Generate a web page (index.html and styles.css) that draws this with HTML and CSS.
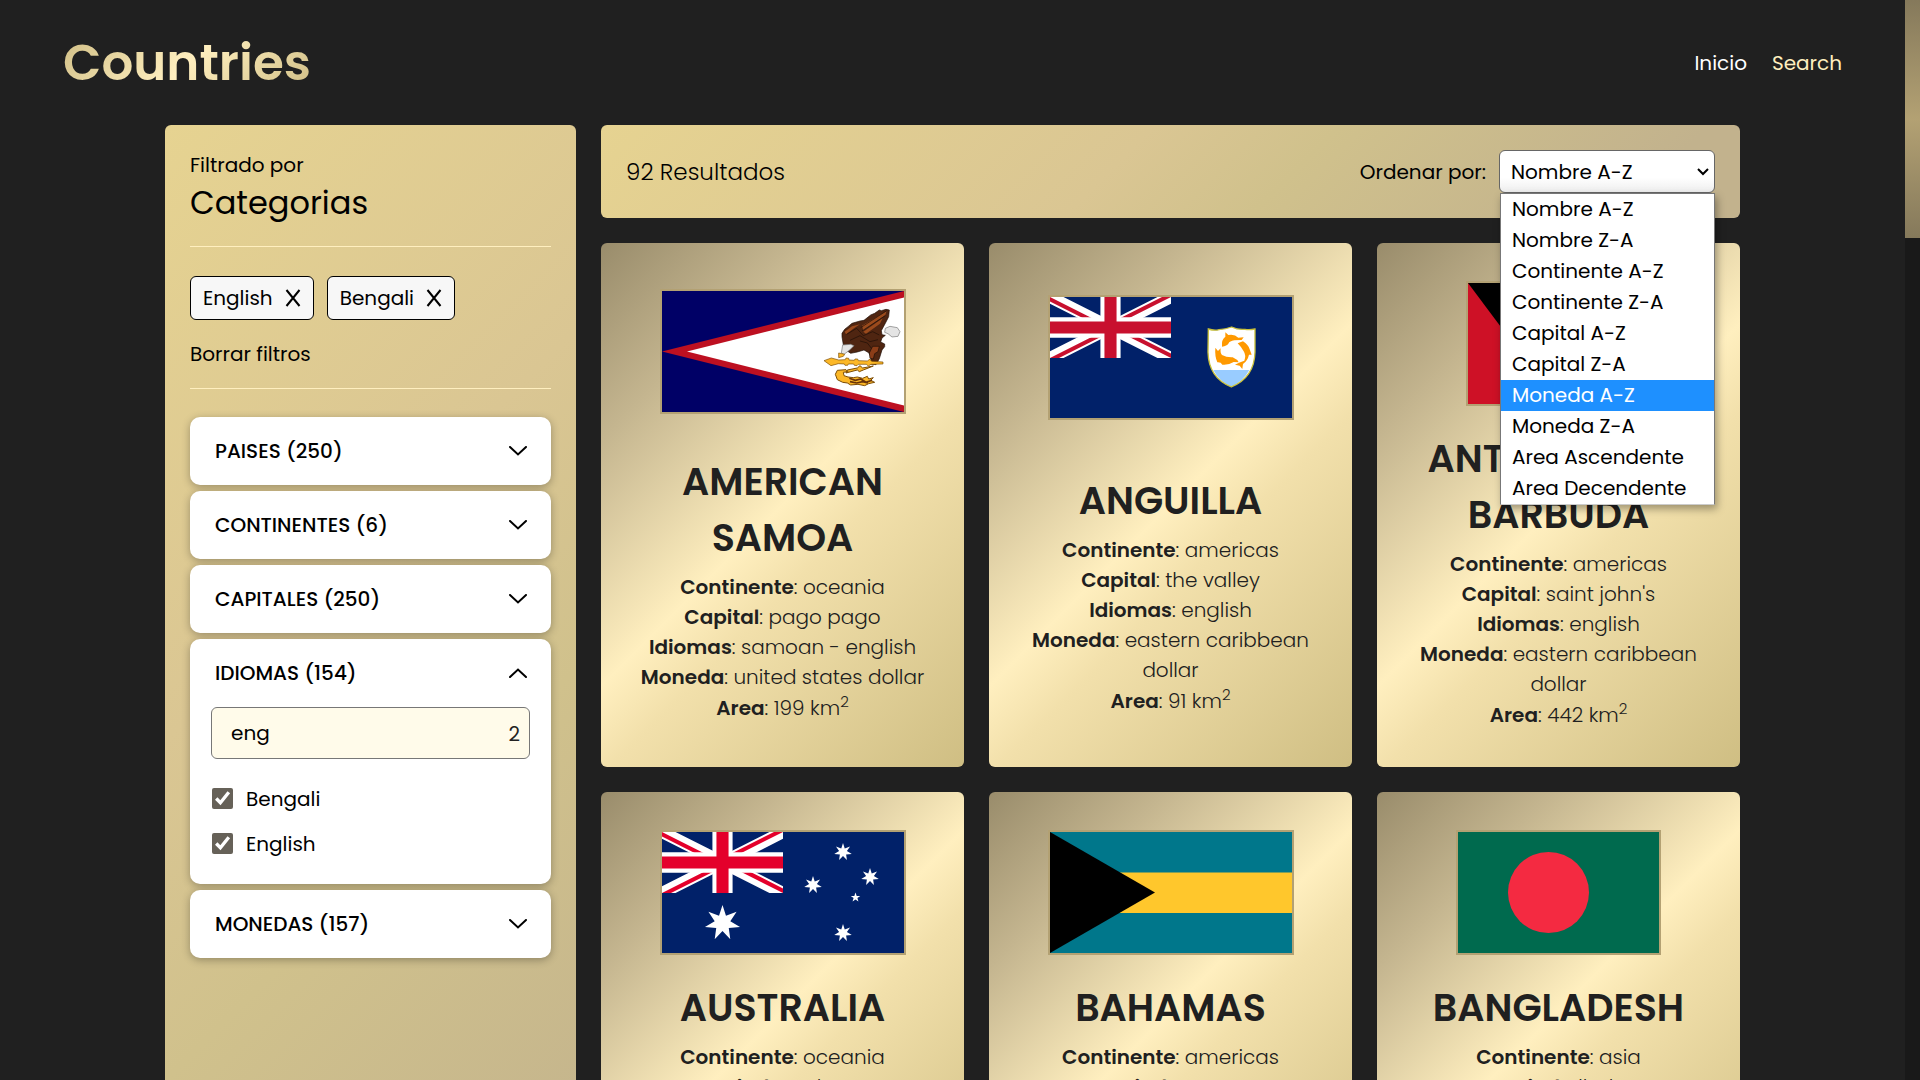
FILE: index.html
```html
<!DOCTYPE html>
<html lang="es">
<head>
<meta charset="utf-8">
<meta name="viewport" content="width=device-width, initial-scale=1">
<title>Countries</title>
<link rel="stylesheet" href="styles.css">
</head>
<body>
<svg class="defs" aria-hidden="true">
  <defs>
    <clipPath id="canton"><path d="M0 0h60v30H0z"/></clipPath>
    <clipPath id="saltire"><path d="M30 15h30v15zM30 15v15H0zM30 15H0V0zM30 15V0h30z"/></clipPath>
    <g id="jack-white" clip-path="url(#canton)"><path d="M0 0l60 30M60 0L0 30" stroke="#fff" stroke-width="6"/></g>
    <path id="jack-diag" d="M0 0l60 30M60 0L0 30" clip-path="url(#saltire)" stroke="currentColor" stroke-width="4"/>
    <g id="jack"><use href="#jack-white"/><use href="#jack-diag"/><path d="M30 0v30M0 15h60" stroke="#fff" stroke-width="10"/><path d="M30 0v30M0 15h60" stroke="currentColor" stroke-width="6"/></g>
    <path id="star7" d="M0-9L1.74-3.6 7.04-5.61 3.9-.89 8.77 2 3.13 2.49 3.9 8.11 0 4-3.9 8.11-3.13 2.49-8.77 2-3.9-.89-7.04-5.61-1.74-3.6z"/>
  </defs>
</svg>
<div class="page">
  <header class="header">
    <a class="logo" href="#">Countries</a>
    <nav class="nav">
      <a href="#">Inicio</a>
      <a class="active" href="#">Search</a>
    </nav>
  </header>

  <div class="container">
    <aside class="sidebar">
      <div class="heading">
        <p>Filtrado por</p>
        <h2>Categorias</h2>
      </div>
      <div class="applied">
        <div class="tags">
          <button class="tag" type="button">English <svg width="16" height="18" viewBox="0 0 16 18"><path d="M1.500 1l13 16M14.500 1l-13 16"/></svg></button>
          <button class="tag" type="button">Bengali <svg width="16" height="18" viewBox="0 0 16 18"><path d="M1.500 1l13 16M14.500 1l-13 16"/></svg></button>
        </div>
        <button class="clear" type="button">Borrar filtros</button>
      </div>
      <div class="accordion">
        <section class="panel"><button class="toggle" type="button">PAISES (250) <svg class="chevron" viewBox="0 0 18 10"><path d="M1 1l8 7.500L17 1"/></svg></button></section>
        <section class="panel"><button class="toggle" type="button">CONTINENTES (6) <svg class="chevron" viewBox="0 0 18 10"><path d="M1 1l8 7.500L17 1"/></svg></button></section>
        <section class="panel"><button class="toggle" type="button">CAPITALES (250) <svg class="chevron" viewBox="0 0 18 10"><path d="M1 1l8 7.500L17 1"/></svg></button></section>
        <section class="panel">
          <button class="toggle" type="button" aria-expanded="true">IDIOMAS (154) <svg class="chevron" viewBox="0 0 18 10"><path d="M1 9l8-7.500L17 9"/></svg></button>
          <div class="panel-body">
            <div class="search"><input type="text" value="eng" aria-label="Buscar idioma"><span class="count">2</span></div>
            <label class="check"><input type="checkbox" checked> Bengali</label>
            <label class="check"><input type="checkbox" checked> English</label>
          </div>
        </section>
        <section class="panel"><button class="toggle" type="button">MONEDAS (157) <svg class="chevron" viewBox="0 0 18 10"><path d="M1 1l8 7.500L17 1"/></svg></button></section>
      </div>
    </aside>

    <main class="main">
      <div class="bar">
        <p class="results">92 Resultados</p>
        <div class="sort">
          <label for="order">Ordenar por:</label>
          <div class="select-wrap">
            <select id="order">
              <option>Nombre A-Z</option><option>Nombre Z-A</option><option>Continente A-Z</option><option>Continente Z-A</option><option>Capital A-Z</option><option>Capital Z-A</option><option>Moneda A-Z</option><option>Moneda Z-A</option><option>Area Ascendente</option><option>Area Decendente</option>
            </select>
            <svg class="arrow" viewBox="0 0 12 8"><path d="M1 1l5 5 5-5"/></svg>
            <ul class="menu">
              <li>Nombre A-Z</li>
              <li>Nombre Z-A</li>
              <li>Continente A-Z</li>
              <li>Continente Z-A</li>
              <li>Capital A-Z</li>
              <li>Capital Z-A</li>
              <li class="hover">Moneda A-Z</li>
              <li>Moneda Z-A</li>
              <li>Area Ascendente</li>
              <li>Area Decendente</li>
            </ul>
          </div>
        </div>
      </div>

      <div class="cards">
        <article class="card">
          <svg class="flag" viewBox="0 0 242 121">
            <path fill="#006" d="M0 0h242v121H0z"/>
            <path fill="#bd1021" d="M0 60.500L242 0v121z"/>
            <path fill="#fff" d="M25 60.500L242 6.500v108z"/>
            <g transform="translate(138) scale(.3333)">
              <path fill="#4f2511" stroke="#1d0d06" stroke-width="2" d="M126 137l0-10 8-12 10-8 12-10 24-7 12-2 20-16 12-5 14-10 6 2 14-4 10 2-2 20-8 16-14 26 2 12 10 2-10 8-4 12 12 6 0 8-8 10-8 26-10 18-18-2 4-20-8-14-14-8-20 6-20 4-20-14z"/>
              <path fill="#9a4a1c" d="M186 104l74-44-4 12-66 46zM190 122l58-40-8 16-42 30zM134 122l22-16 24-6-18 12-24 18z"/>
              <path fill="none" stroke="#1d0d06" stroke-width="2" d="M182 110l80-52M186 120l70-46M140 130l30-18 20 22 28-12 20 10M150 148l30-14 30 18 24-6M180 150l22 6 14 18"/>
              <path fill="#e4e4e4" stroke="#777" stroke-width="2" d="M256 112l14-6 22 4 8 12-6 14-18 2-12-10-10-4zM128 162l24-2 10 4-14 14-16 12-8-4z"/>
              <path fill="#8b3d18" stroke="#1d0d06" stroke-width="2" d="M218 166l20 0-4 16-10 6-4 16-10-2-2-16z"/>
              <path fill="#fcb827" stroke="#7a4b05" stroke-width="2" d="M116 186l18 4-4 6-14 4zM72 209l22-8 22 6 20-1 2-5 8 1 1 5 16 1 2-4 8 0 2 5 28 1 6-6 6 7 34 2v6l-36 1-8 5-6-5-24 0-4 4-8-1-2-4-16 0-2 4-8 0-2-4-18-1-22 6z"/>
              <path fill="#fcb827" stroke="#7a4b05" stroke-width="3" d="M142 237l30-6 8-7 8 7 32-6-30 12-12 5-6-5-34 9zM138 236l-26 2-6 12 6 16 16 8 14 2 10 6 22-2 20 4 12-6 18-4-12-6 8-8-14 4-4-8-14 6-16-4-12 2-16-2-12-4-2-10 14-2z"/>
              <path fill="none" stroke="#6b3408" stroke-width="5" d="M148 262l18 6 16-4 16 10 18-6M150 272l20 4 18-4 16 4"/>
            </g>
          </svg>
          <div class="info">
            <h3>AMERICAN SAMOA</h3>
            <p><b>Continente</b>: oceania</p>
            <p><b>Capital</b>: pago pago</p>
            <p><b>Idiomas</b>: samoan - english</p>
            <p><b>Moneda</b>: united states dollar</p>
            <p class="area"><b>Area</b>: 199 km<sup>2</sup></p>
          </div>
        </article>

        <article class="card">
          <svg class="flag" viewBox="0 0 242 121">
            <path fill="#012169" d="M0 0h242v121H0z"/>
            <svg width="121" height="61" viewBox="0 0 60 30" preserveAspectRatio="none" color="#c8102e"><use href="#jack"/></svg>
            <g transform="translate(140 13) scale(.3333)">
              <path fill="#fff" d="M55 57q18 6 32 2 20-1 38-8 18 9 40 7 14 2 30-1v70q-2 76-71 104Q56 204 54 127z"/>
              <path fill="#9cf" d="M70 180h108q-18 34-54 50-37-16-54-50z"/>
              <path fill="none" stroke="#c9c13c" stroke-width="4" d="M55 57q18 6 32 2 20-1 38-8 18 9 40 7 14 2 30-1v70q-2 76-71 104Q56 204 54 127z"/>
              <path fill="#ff9900" d="M96 110q-2-22 10-30l0-13 9 8q18-4 30 8l16-1-6 8-22 1q-14 2-18 10-4 6-19 9zM143 100l16-6q16 10 20 24l6 16-8 0q-4 18-18 28l-2 15-8-10-14-3 12-6 16-6q6-16-2-28-6-12-18-24zM82 157q-8-18-6-44l8 10 8-8q-2 14 4 20 14 8 32 7l14 8 4 7-15-1q-16 10-34 8-4-8-15-7z"/>
            </g>
          </svg>
          <div class="info">
            <h3>ANGUILLA</h3>
            <p><b>Continente</b>: americas</p>
            <p><b>Capital</b>: the valley</p>
            <p><b>Idiomas</b>: english</p>
            <p><b>Moneda</b>: eastern caribbean dollar</p>
            <p class="area"><b>Area</b>: 91 km<sup>2</sup></p>
          </div>
        </article>

        <article class="card">
          <svg class="flag" viewBox="0 0 181 121">
            <path fill="#ce1126" d="M0 0h181v121H0z"/>
            <path d="M0 0h181L90.500 121z"/>
            <path fill="#fcd116" d="M60 50l8-10-2-12 12 2 12-10 12 10 12-2-2 12 8 10z"/>
            <path fill="#0072c6" d="M36 48h109l-18 25H54z"/>
            <path fill="#fff" d="M54 73h73l-36.500 48z"/>
          </svg>
          <div class="info">
            <h3>ANTIGUA AND BARBUDA</h3>
            <p><b>Continente</b>: americas</p>
            <p><b>Capital</b>: saint john's</p>
            <p><b>Idiomas</b>: english</p>
            <p><b>Moneda</b>: eastern caribbean dollar</p>
            <p class="area"><b>Area</b>: 442 km<sup>2</sup></p>
          </div>
        </article>

        <article class="card">
          <svg class="flag" viewBox="0 0 242 121">
            <path fill="#012169" d="M0 0h242v121H0z"/>
            <svg width="121" height="61" viewBox="0 0 60 30" preserveAspectRatio="none" color="#e4002b"><use href="#jack"/></svg>
            <g fill="#fff">
              <use href="#star7" transform="translate(60.500 91) scale(2)"/>
              <use href="#star7" transform="translate(181 20)"/>
              <use href="#star7" transform="translate(208 45)"/>
              <use href="#star7" transform="translate(151 53)"/>
              <use href="#star7" transform="translate(181 101)"/>
              <path transform="translate(193.500 65.500)" d="M0-5l1.180 3.380 3.580.07L1.900.62l1.040 3.430L0 2l-2.940 2.050L-1.900.62l-2.860-2.170 3.580-.07z"/>
            </g>
          </svg>
          <div class="info">
            <h3>AUSTRALIA</h3>
            <p><b>Continente</b>: oceania</p>
            <p><b>Capital</b>: canberra</p>
            <p><b>Idiomas</b>: english</p>
            <p><b>Moneda</b>: australian dollar</p>
            <p class="area"><b>Area</b>: 7692024 km<sup>2</sup></p>
          </div>
        </article>

        <article class="card">
          <svg class="flag" viewBox="0 0 242 121">
            <path fill="#00778b" d="M0 0h242v121H0z"/>
            <path fill="#ffc72c" d="M0 40.500h242v40.500H0z"/>
            <path d="M0 0l105 60.500L0 121z"/>
          </svg>
          <div class="info">
            <h3>BAHAMAS</h3>
            <p><b>Continente</b>: americas</p>
            <p><b>Capital</b>: nassau</p>
            <p><b>Idiomas</b>: english</p>
            <p><b>Moneda</b>: bahamian dollar</p>
            <p class="area"><b>Area</b>: 13943 km<sup>2</sup></p>
          </div>
        </article>

        <article class="card">
          <svg class="flag" viewBox="0 0 201 121">
            <path fill="#006a4e" d="M0 0h201v121H0z"/>
            <circle cx="90.500" cy="60.500" r="40.500" fill="#f42a41"/>
          </svg>
          <div class="info">
            <h3>BANGLADESH</h3>
            <p><b>Continente</b>: asia</p>
            <p><b>Capital</b>: dhaka</p>
            <p><b>Idiomas</b>: bengali</p>
            <p><b>Moneda</b>: bangladeshi taka</p>
            <p class="area"><b>Area</b>: 147570 km<sup>2</sup></p>
          </div>
        </article>
      </div>
    </main>
  </div>
</div>
<div class="scrollbar" aria-hidden="true"><div class="thumb"></div></div>
</body>
</html>
```
FILE: styles.css
```css
* { box-sizing: border-box; margin: 0; padding: 0; }

body {
  display: flex;
  height: 100vh;
  overflow: hidden;
  background: #202020;
  color: #000;
  font: 400 20px/30px Poppins, Inter, "Open Sans", sans-serif;
}

button, input, select { font: inherit; color: inherit; }
button { border: 0; background: none; cursor: pointer; }
a { text-decoration: none; }
.defs { position: absolute; width: 0; height: 0; }

.page { flex: 1; overflow-y: auto; scrollbar-width: none; }

.scrollbar { width: 15px; background: #191919; }
.thumb { height: 22%; background: linear-gradient(#85795b, #b3a173 50%, #85795b); }

.header {
  display: flex;
  justify-content: space-between;
  align-items: center;
  height: 125px;
  padding: 0 63px;
}
.logo {
  font-size: 50px;
  line-height: 76px;
  font-weight: 600;
  color: transparent;
  background: linear-gradient(135deg, #cdbb82, #ffefbf 50%, #cdbb82);
  -webkit-background-clip: text;
  background-clip: text;
}
.nav { display: flex; gap: 25px; }
.nav a { color: #fff; }
.nav .active { color: #ffefbf; }

.container {
  display: grid;
  grid-template-columns: 411px 1fr;
  gap: 25px;
  max-width: 1575px;
  margin: 0 auto;
}

.sidebar {
  padding: 25px;
  border-radius: 6px;
  background: linear-gradient(135deg, #e6d391, #dac693 40%, #d0c18c 62%, #c2b28d);
}
.heading { padding-bottom: 20px; border-bottom: 1px solid #ffefbf; }
.heading h2 { font-size: 32px; line-height: 46px; font-weight: 400; }
.applied { padding: 29px 0 19px; border-bottom: 1px solid #ffefbf; }
.tags { display: flex; gap: 13px; margin-bottom: 19px; }
.tag {
  display: flex;
  align-items: center;
  gap: 12px;
  height: 44px;
  padding: 0 12px;
  border: 1px solid #000;
  border-radius: 6px;
  background: #f7f7f7;
}
.tag path { stroke: #000; stroke-width: 2; }
.clear { display: block; }

.accordion { display: grid; gap: 6px; margin-top: 28px; }
.panel {
  border-radius: 10px;
  background: #fff;
  box-shadow: 0 2px 8px rgba(0, 0, 0, .3);
}
.toggle {
  display: flex;
  justify-content: space-between;
  align-items: center;
  width: 100%;
  height: 68px;
  padding: 0 25px;
  font-weight: 500;
}
.chevron { width: 18px; height: 10px; margin-right: -1px; }
.chevron path { fill: none; stroke: #000; stroke-width: 2; stroke-linecap: round; }
.panel-body { padding: 0 21px 18px; }
.search { position: relative; margin-bottom: 17px; }
.search input {
  width: 100%;
  height: 52px;
  padding: 0 40px 0 19px;
  border: 1px solid #777;
  border-radius: 6px;
  background: #fffbea;
}
.count { position: absolute; right: 10px; top: 12px; color: #222; }
.check { display: flex; align-items: center; gap: 13px; height: 45px; padding-left: 1px; }
.check input { width: 21px; height: 21px; accent-color: #666158; }

.bar {
  display: flex;
  justify-content: space-between;
  align-items: center;
  height: 93px;
  padding: 0 25px;
  border-radius: 6px;
  background: linear-gradient(135deg, #e6d391, #dac693 45%, #d0c18c 60%, #c2b28d 90%);
}
.results { font-size: 23px; font-weight: 300; }
.sort { display: flex; align-items: center; gap: 13px; }
.select-wrap { position: relative; width: 216px; }
select {
  display: block;
  appearance: none;
  width: 100%;
  height: 43px;
  padding: 0 11px;
  border: 1px solid #666;
  border-radius: 6px;
  background: linear-gradient(#fff 65%, #eee);
}
.arrow { position: absolute; top: 18px; right: 6px; width: 12px; height: 8px; pointer-events: none; }
.arrow path { fill: none; stroke: #000; stroke-width: 2; }
.menu {
  position: absolute;
  top: 100%;
  left: 1px;
  right: 0;
  border: 1px solid #777;
  border-bottom-color: #ccc;
  background: #fff;
  box-shadow: 2px 4px 8px rgba(0, 0, 0, .35);
  list-style: none;
}
.menu li { padding: 0 11px; line-height: 31px; }
.menu .hover { background: #1e90ff; color: #fff; }

.cards {
  display: grid;
  grid-template-columns: repeat(3, 1fr);
  gap: 25px;
  padding: 25px 0;
}
.card {
  display: flex;
  flex-direction: column;
  justify-content: space-around;
  align-items: center;
  gap: 25px;
  padding: 38px 28px 37px;
  border-radius: 6px;
  background: linear-gradient(135deg, #998c6b, #c4b58f 22%, #ffefbf 50%, #f2e0ab 60%, #cfbe83);
  color: #202020;
  text-align: center;
  font-weight: 300;
}
.flag { height: 125px; border: 2px solid #b3a173; }
h3 { margin-bottom: 6px; font-size: 38px; line-height: 56px; font-weight: 600; }
b { font-weight: 600; }
sup { font-size: 15px; line-height: 1; }
.area { padding-top: 1px; }
```
